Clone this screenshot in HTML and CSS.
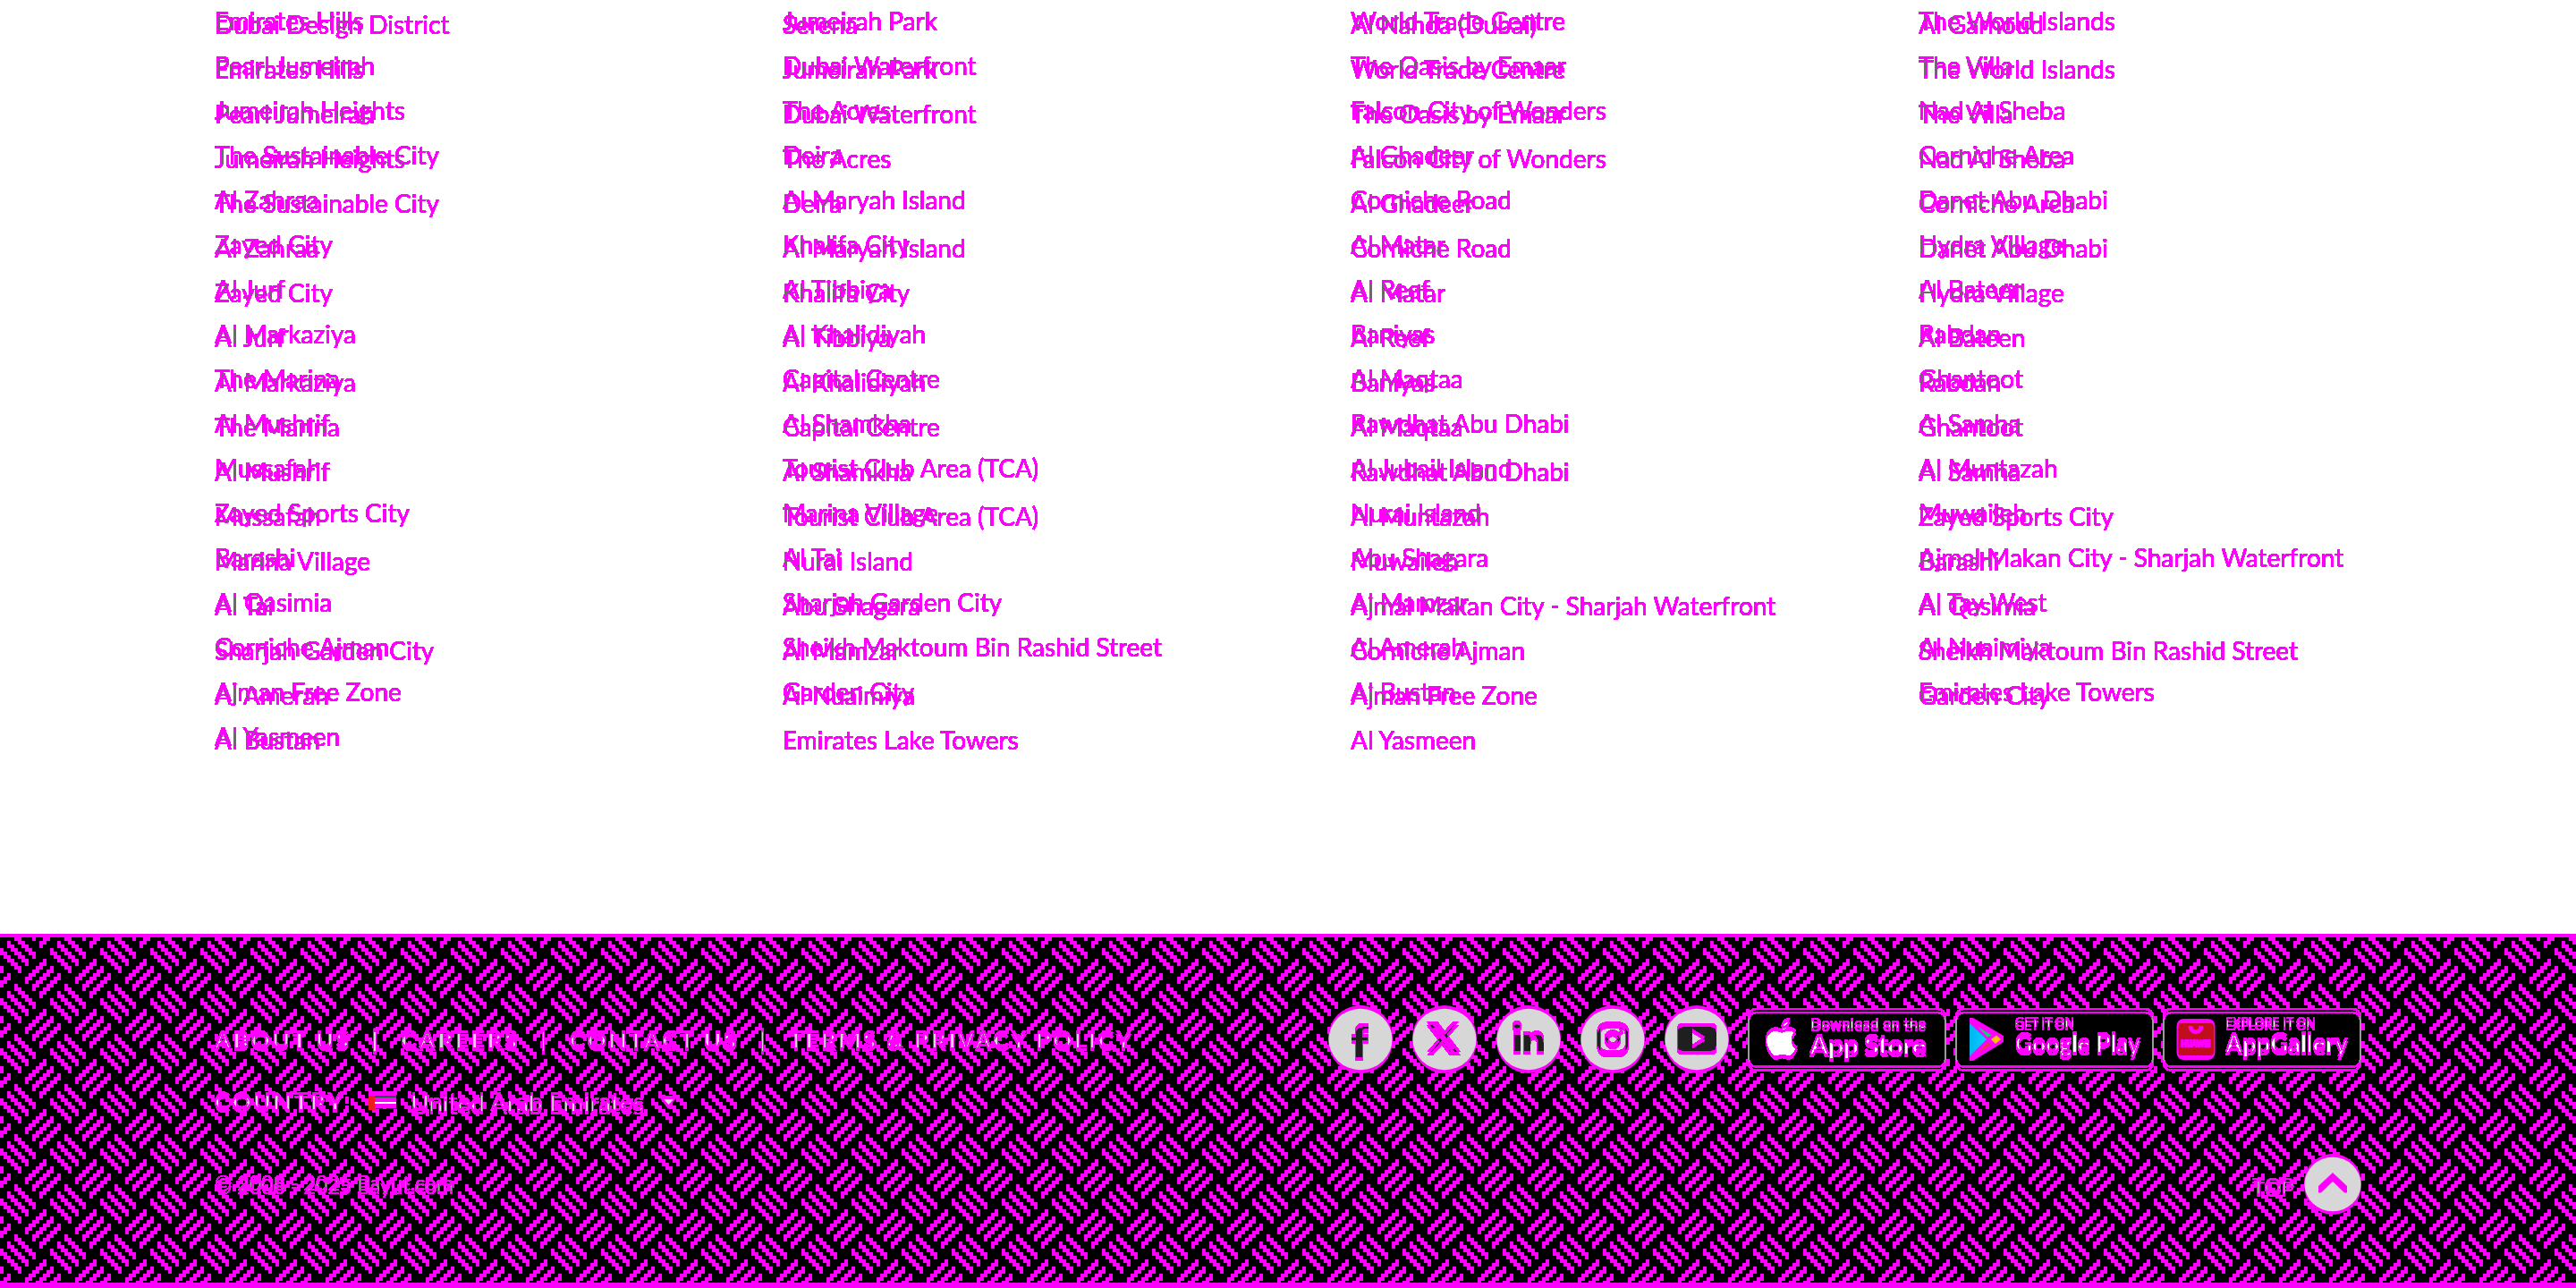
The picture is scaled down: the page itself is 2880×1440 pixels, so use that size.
FILE: index.html
```html
<!DOCTYPE html>
<html lang="en">
<head>
<meta charset="utf-8">
<title>Bayut</title>
<link rel="stylesheet" href="styles.css">
</head>
<body>
<svg class="defs" width="0" height="0" aria-hidden="true">
  <defs>
    <filter id="overlap" x="0" y="0" width="100%" height="100%" color-interpolation-filters="sRGB">
      <feColorMatrix type="matrix" values="-1.93 0 -1.93 0 4.28  1.4 0 1.4 0 -2.38  -1.93 0 -1.93 0 4.28  0 0 0 30 -0.6"/>
    </filter>
    <filter id="ghost-light" x="-5%" y="-50%" width="110%" height="200%" color-interpolation-filters="sRGB">
      <feOffset in="SourceAlpha" dy="-4" result="up"/>
      <feMerge result="both"><feMergeNode in="up"/><feMergeNode in="SourceAlpha"/></feMerge>
      <feColorMatrix in="both" values="0 0 0 0 1 0 0 0 0 0 0 0 0 0 1 0 0 0 20 -0.6" result="edge"/>
      <feComposite in="SourceAlpha" in2="up" operator="in"/>
      <feColorMatrix values="0 0 0 0 .84 0 0 0 0 .84 0 0 0 0 .84 0 0 0 6 -5" result="core"/>
      <feMerge><feMergeNode in="edge"/><feMergeNode in="core"/></feMerge>
    </filter>
    <filter id="ghost-mid" x="-5%" y="-50%" width="110%" height="200%" color-interpolation-filters="sRGB">
      <feOffset in="SourceAlpha" dy="-4" result="up"/>
      <feMerge result="both"><feMergeNode in="up"/><feMergeNode in="SourceAlpha"/></feMerge>
      <feColorMatrix in="both" values="0 0 0 0 1 0 0 0 0 0 0 0 0 0 1 0 0 0 20 -0.6" result="edge"/>
      <feComposite in="SourceAlpha" in2="up" operator="in"/>
      <feColorMatrix values="0 0 0 0 .6 0 0 0 0 .6 0 0 0 0 .6 0 0 0 6 -5" result="core"/>
      <feMerge><feMergeNode in="edge"/><feMergeNode in="core"/></feMerge>
    </filter>
    <filter id="ghost-white" x="-5%" y="-50%" width="110%" height="200%" color-interpolation-filters="sRGB">
      <feOffset in="SourceAlpha" dy="-4" result="up"/>
      <feMerge result="both"><feMergeNode in="up"/><feMergeNode in="SourceAlpha"/></feMerge>
      <feColorMatrix in="both" values="0 0 0 0 1 0 0 0 0 0 0 0 0 0 1 0 0 0 20 -0.6" result="edge"/>
      <feComposite in="SourceAlpha" in2="up" operator="in"/>
      <feColorMatrix values="0 0 0 0 1 0 0 0 0 1 0 0 0 0 1 0 0 0 6 -5" result="core"/>
      <feMerge><feMergeNode in="edge"/><feMergeNode in="core"/></feMerge>
    </filter>
    <filter id="ghost-dark" x="-5%" y="-50%" width="110%" height="200%" color-interpolation-filters="sRGB">
      <feOffset in="SourceAlpha" dy="-4" result="up"/>
      <feMerge result="both"><feMergeNode in="up"/><feMergeNode in="SourceAlpha"/></feMerge>
      <feColorMatrix in="both" values="0 0 0 0 1 0 0 0 0 0 0 0 0 0 1 0 0 0 20 -0.6" result="edge"/>
      <feComposite in="SourceAlpha" in2="up" operator="in"/>
      <feColorMatrix values="0 0 0 0 .12 0 0 0 0 .12 0 0 0 0 .12 0 0 0 6 -5" result="core"/>
      <feMerge><feMergeNode in="edge"/><feMergeNode in="core"/></feMerge>
    </filter>
    <linearGradient id="blue" x1="0" y1="0" x2="1" y2="0"><stop offset="0" stop-color="#00b4f0"/><stop offset="1" stop-color="#00d2ff"/></linearGradient>
    <pattern id="weave" width="56" height="56" patternUnits="userSpaceOnUse">
      <g id="cell" fill="none" stroke="#f0f" stroke-width="4">
        <path d="M10 8v8M14 12v8M18 16v8M22 20v8M26 24v8M30 28v8"/>
        <path d="M18 0v8M22 4v8M26 8v8M30 12v8M34 16v8M38 20v8"/>
        <path d="M2 16v8M6 20v8M10 24v8M14 28v8M18 32v8M22 36v8"/>
        <path d="M50 28v8M46 32v8M42 36v8M38 40v8M34 44v8M30 48v8"/>
        <path d="M2 36v8M54 40v8M50 44v8M46 48v8M42 52v4M42 0v4M38 0v8"/>
        <path d="M10 44v8M6 48v8M2 52v4M2 0v4M54 0v8M50 4v8M46 8v8"/>
      </g>
    </pattern>
  </defs>
</svg>

<main class="areas">
  <ul class="list list-new">
    <li>Emirates Hills</li><li>Jumeirah Park</li><li>World Trade Centre</li><li>The World Islands</li>
    <li>Pearl Jumeirah</li><li>Dubai Waterfront</li><li>The Oasis by Emaar</li><li>The Villa</li>
    <li>Jumeirah Heights</li><li>The Acres</li><li>Falcon City of Wonders</li><li>Nad Al Sheba</li>
    <li>The Sustainable City</li><li>Deira</li><li>Al Ghadeer</li><li>Corniche Area</li>
    <li>Al Zahraa</li><li>Al Maryah Island</li><li>Corniche Road</li><li>Danet Abu Dhabi</li>
    <li>Zayed City</li><li>Khalifa City</li><li>Al Matar</li><li>Hydra Village</li>
    <li>Al Jurf</li><li>Al Tibbiya</li><li>Al Reef</li><li>Al Bateen</li>
    <li>Al Markaziya</li><li>Al Khalidiyah</li><li>Baniyas</li><li>Rabdan</li>
    <li>The Marina</li><li>Capital Centre</li><li>Al Maqtaa</li><li>Ghantoot</li>
    <li>Al Mushrif</li><li>Al Shamkha</li><li>Rawdhat Abu Dhabi</li><li>Al Samha</li>
    <li>Mussafah</li><li>Tourist Club Area (TCA)</li><li>Al Jubail Island</li><li>Al Muntazah</li>
    <li>Zayed Sports City</li><li>Marina Village</li><li>Nurai Island</li><li>Muwaileh</li>
    <li>Barashi</li><li>Al Tai</li><li>Abu Shagara</li><li>Ajmal Makan City - Sharjah Waterfront</li>
    <li>Al Qasimia</li><li>Sharjah Garden City</li><li>Al Mamzar</li><li>Al Tay West</li>
    <li>Corniche Ajman</li><li>Sheikh Maktoum Bin Rashid Street</li><li>Al Amerah</li><li>Al Nuaimiya</li>
    <li>Ajman Free Zone</li><li>Garden City</li><li>Al Bustan</li><li>Emirates Lake Towers</li>
    <li>Al Yasmeen</li>
  </ul>
  <ul class="list list-old">
    <li>Dubai Design District</li><li>Serena</li><li>Al Nahda (Dubai)</li><li>Al Garhoud</li>
    <li>Emirates Hills</li><li>Jumeirah Park</li><li>World Trade Centre</li><li>The World Islands</li>
    <li>Pearl Jumeirah</li><li>Dubai Waterfront</li><li>The Oasis by Emaar</li><li>The Villa</li>
    <li>Jumeirah Heights</li><li>The Acres</li><li>Falcon City of Wonders</li><li>Nad Al Sheba</li>
    <li>The Sustainable City</li><li>Deira</li><li>Al Ghadeer</li><li>Corniche Area</li>
    <li>Al Zahraa</li><li>Al Maryah Island</li><li>Corniche Road</li><li>Danet Abu Dhabi</li>
    <li>Zayed City</li><li>Khalifa City</li><li>Al Matar</li><li>Hydra Village</li>
    <li>Al Jurf</li><li>Al Tibbiya</li><li>Al Reef</li><li>Al Bateen</li>
    <li>Al Markaziya</li><li>Al Khalidiyah</li><li>Baniyas</li><li>Rabdan</li>
    <li>The Marina</li><li>Capital Centre</li><li>Al Maqtaa</li><li>Ghantoot</li>
    <li>Al Mushrif</li><li>Al Shamkha</li><li>Rawdhat Abu Dhabi</li><li>Al Samha</li>
    <li>Mussafah</li><li>Tourist Club Area (TCA)</li><li>Al Muntazah</li><li>Zayed Sports City</li>
    <li>Marina Village</li><li>Nurai Island</li><li>Muwaileh</li><li>Barashi</li>
    <li>Al Tai</li><li>Abu Shagara</li><li>Ajmal Makan City - Sharjah Waterfront</li><li>Al Qasimia</li>
    <li>Sharjah Garden City</li><li>Al Mamzar</li><li>Corniche Ajman</li><li>Sheikh Maktoum Bin Rashid Street</li>
    <li>Al Amerah</li><li>Al Nuaimiya</li><li>Ajman Free Zone</li><li>Garden City</li>
    <li>Al Bustan</li><li>Emirates Lake Towers</li><li>Al Yasmeen</li>
  </ul>
</main>

<footer class="footer">
  <svg class="weave" width="2880" height="396" shape-rendering="crispEdges" aria-hidden="true"><rect width="2880" height="396" fill="url(#weave)"/></svg>
  <div class="row row-main">
    <nav class="nav">
      <a>ABOUT US</a><i>|</i><a>CAREERS</a><i>|</i><a>CONTACT US</a><i>|</i><a>TERMS &amp; PRIVACY POLICY</a>
    </nav>
    <div class="social">
      <svg class="disc" viewBox="0 0 72 76"><use href="#disc"/><path filter="url(#ghost-dark)" d="M30.5 62V43H26V36H30.5V32Q30.5 24 39 24H45V30.5H41Q38.5 30.5 38.5 33V36H44.5V43H38.5V62Z"/></svg>
      <svg class="disc" viewBox="0 0 72 76"><use href="#disc"/><g filter="url(#ghost-dark)"><path transform="translate(13.8 18) scale(1.75)" d="M18.244 2.25h3.308l-7.227 8.26 8.502 11.24H16.17l-5.214-6.817L4.99 21.75H1.68l7.73-8.835L1.254 2.25H8.08l4.713 6.231zm-1.161 17.52h1.833L7.084 4.126H5.117z"/></g></svg>
      <svg class="disc" viewBox="0 0 72 76"><use href="#disc"/><path filter="url(#ghost-dark)" d="M23 21a4.5 4.5 0 1 1 0 9a4.5 4.5 0 1 1 0-9ZM19.5 33H27V55H19.5ZM30.5 33H37.5V36Q40 32.5 45 32.5Q53 32.5 53 42V55H45.5V44Q45.5 38.5 41.8 38.5Q38 38.5 38 44V55H30.5Z"/></svg>
      <svg class="disc" viewBox="0 0 72 76"><use href="#disc"/><g filter="url(#ghost-dark)" fill="none" stroke="#000" stroke-width="3.4"><rect x="20.4" y="24.4" width="31.4" height="31.4" rx="8"/><circle cx="36" cy="40" r="7"/><circle cx="45.5" cy="30.5" r="2" fill="#000" stroke="none"/></g></svg>
      <svg class="disc" viewBox="0 0 72 76"><use href="#disc"/><path filter="url(#ghost-dark)" fill-rule="evenodd" d="M20 24H52Q58 24 58 30V49Q58 55 52 55H20Q14.200 55 14.200 49V30Q14.200 24 20 24ZM31 30.500V48L45 39.200Z"/></svg>
    </div>
    <div class="badges">
      <svg class="badge" viewBox="0 0 222 72">
        <use href="#frame"/>
        <g filter="url(#ghost-white)"><path transform="translate(16.500 15) scale(1.78)" d="M12.152 6.896c-.948 0-2.415-1.078-3.96-1.04-2.04.027-3.910 1.183-4.961 3.014-2.117 3.675-.546 9.103 1.519 12.090 1.013 1.454 2.208 3.090 3.792 3.039 1.520-.065 2.090-.987 3.935-.987 1.831 0 2.350.987 3.960.948 1.637-.026 2.676-1.480 3.676-2.948 1.156-1.688 1.636-3.325 1.662-3.415-.039-.013-3.182-1.221-3.220-4.857-.026-3.040 2.480-4.494 2.597-4.559-1.429-2.090-3.623-2.324-4.390-2.376-2-.156-3.675 1.090-4.610 1.090zM15.530 3.830c.843-1.012 1.400-2.427 1.245-3.830-1.207.052-2.662.805-3.532 1.818-.780.896-1.454 2.338-1.273 3.714 1.338.104 2.715-.688 3.559-1.701"/></g>
        <text class="small" x="70" y="26" textLength="129">Download on the</text>
        <text class="big" x="69" y="55" textLength="131">App Store</text>
      </svg>
      <svg class="badge" viewBox="0 0 222 72">
        <use href="#frame"/>
        <path d="M16 11L20 11L54 31V38L20 59H16Z" fill="#f0f"/>
        <path d="M16 17L35 35L16 54Z" fill="url(#blue)"/>
        <path d="M25 21L41 30.500L36 32.500Z" fill="#00d870"/>
        <path d="M25 50L35.500 39L41 40.500Z" fill="#f0313c"/>
        <path d="M40 35L46 30.500L51 35L45 40Z" fill="#ffc400"/>
        <text class="tiny" x="67" y="25" textLength="66" lengthAdjust="spacingAndGlyphs">GET IT ON</text>
        <text class="big semi" x="67" y="53" textLength="140" lengthAdjust="spacingAndGlyphs">Google Play</text>
      </svg>
      <svg class="badge" viewBox="0 0 222 72">
        <use href="#frame"/>
        <rect x="15.500" y="12" width="43" height="46" rx="8" fill="#f0f"/>
        <rect x="17" y="17" width="40" height="36" rx="4" fill="#c20d1c"/>
        <path d="M31 20C31 29 43 29 43 20" fill="none" stroke="#f0f" stroke-width="5"/>
        <text class="maker" x="20.500" y="43" textLength="33" lengthAdjust="spacingAndGlyphs">HUAWEI</text>
        <text class="tiny" x="70" y="25" textLength="101" lengthAdjust="spacingAndGlyphs">EXPLORE IT ON</text>
        <text class="big semi" x="70" y="53" textLength="137" lengthAdjust="spacingAndGlyphs">AppGallery</text>
      </svg>
    </div>
  </div>
  <div class="row row-country">
    <b class="label">COUNTRY:</b>
    <svg class="flag" viewBox="0 0 31 24"><path d="M0 0H31V19H0Z" fill="#f0f"/><path d="M7 5H31V7H7Z" fill="#14603c"/><path d="M7 12H31V14H7Z" fill="#fff"/><path d="M0 5H7V21H0Z" fill="#ee1c1c"/></svg>
    <span class="country">United Arab Emirates</span>
    <svg class="caret" viewBox="0 0 24 18"><path d="M1 2H23L12 17Z" fill="#f0f"/><path d="M7 6H18L12.500 12Z" fill="#d7d7d7"/></svg>
  </div>
  <div class="row row-end">
    <span class="copy">© 2008 - 2025 Bayut.com</span>
    <span class="top">TOP</span>
    <svg class="up" viewBox="0 0 64 68"><circle cx="32" cy="32" r="32" fill="#f0f"/><circle cx="32" cy="36" r="32" fill="#f0f"/><path d="M0.500 34A31.500 30.200 0 0 1 63.500 34A31.500 30.200 0 0 1 0.500 34Z" fill="#d7d7d7"/><path d="M16 36L32 21L48 36V43.500H45L32 31L19 43.500H16Z" fill="#f0f"/></svg>
  </div>
</footer>

<svg class="defs" width="0" height="0" aria-hidden="true">
  <defs>
    <g id="disc"><circle cx="36" cy="36" r="36" fill="#f0f"/><circle cx="36" cy="40" r="36" fill="#f0f"/><path d="M.5 38A35.500 34.200 0 0 1 71.500 38A35.500 34.200 0 0 1 .5 38Z" fill="#d7d7d7"/></g>
    <g id="frame"><rect x="1" y="1" width="220" height="69" rx="8"/><g filter="url(#ghost-mid)"><rect x="1" y="5" width="220" height="64.500" rx="8" fill="none" stroke="#999" stroke-width="2"/></g></g>
  </defs>
</svg>
</body>
</html>
```
FILE: styles.css
```css
body {
  margin: 0;
  width: 2880px;
  height: 1440px;
  overflow: hidden;
  background: #fff;
  font-family: Lato, "Liberation Sans", sans-serif;
}
.defs { position: absolute; }

/* two generations of the list share one grid cell */
.areas {
  display: grid;
  height: 1044px;
  isolation: isolate;
  filter: url(#overlap);
}
.list {
  grid-area: 1 / 1;
  display: grid;
  grid-template-columns: repeat(4, 635px);
  grid-auto-rows: 50px;
  align-content: start;
  margin: 0;
  padding: 0 0 0 240px;
  list-style: none;
  font-size: 28px;
  line-height: 46px;
  white-space: nowrap;
}
.list-new { color: #f00; }
.list-old { color: #00f; padding-top: 4px; mix-blend-mode: screen; }

.footer {
  position: relative;
  box-sizing: border-box;
  height: 396px;
  padding: 76px 240px 0;
  border-top: 4px solid #f0f;
  border-bottom: 6px solid #f0f;
  background: #000;
}
.weave { position: absolute; left: 0; top: -4px; clip-path: inset(4px 0 6px 0); }
.row { position: relative; display: flex; }
.row-main { height: 76px; align-items: flex-start; }
.nav {
  display: flex;
  width: 1246px;
  padding-top: 23px;
  font-size: 26px;
  font-weight: 700;
  line-height: 36px;
  letter-spacing: 2.8px;
  white-space: nowrap;
  filter: url(#ghost-light);
}
.nav a, .nav i { display: block; }
.nav i { width: 56px; text-align: center; font-style: normal; }
.social { display: flex; gap: 22px; }
.disc { width: 72px; height: 76px; }
.badges { display: flex; gap: 10px; padding-top: 3px; margin-left: 21px; }
.badge { width: 222px; height: 72px; overflow: visible; }
.small { font-size: 16px; font-weight: 700; filter: url(#ghost-white); }
.tiny { font-size: 15px; font-weight: 700; filter: url(#ghost-white); }
.big { font-size: 31px; font-weight: 700; filter: url(#ghost-white); }
.semi { font-size: 30px; }
.maker { font-size: 10px; font-weight: 900; fill: #f0f; stroke: #f0f; stroke-width: 2px; }

.row-country { height: 40px; padding-top: 15px; align-items: center; }
.label { width: 172px; margin-bottom: 3px; font-size: 26px; letter-spacing: 2.9px; filter: url(#ghost-light); }
.flag { width: 31px; height: 24px; margin-bottom: 6px; }
.country { width: 268px; margin-left: 16px; font-size: 28px; filter: url(#ghost-light); }
.caret { width: 24px; height: 18px; margin: 0 0 6px 8px; }

.row-end { height: 68px; margin-top: 35px; align-items: center; color: #999; }
.copy { width: 2278px; padding-top: 4px; font-size: 23.2px; filter: url(#ghost-mid); }
.top { width: 58px; padding-top: 8px; font-size: 24px; filter: url(#ghost-mid); }
.up { width: 64px; height: 68px; }
```
